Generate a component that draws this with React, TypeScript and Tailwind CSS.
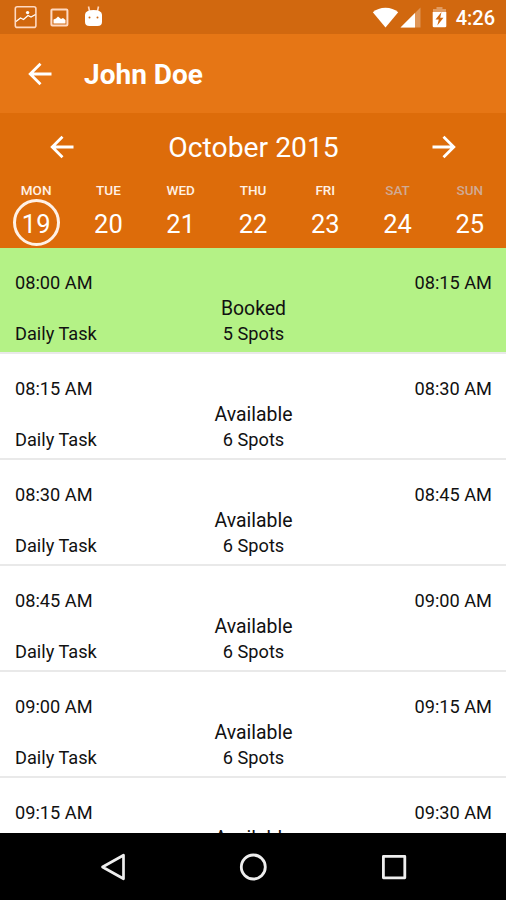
import { useState } from 'react';

interface Day {
  label: string;
  date: number;
  weekend?: boolean;
}

interface Slot {
  start: string;
  end: string;
  title: string;
  spots: number;
  booked?: boolean;
}

const days: Day[] = [
  { label: 'MON', date: 19 },
  { label: 'TUE', date: 20 },
  { label: 'WED', date: 21 },
  { label: 'THU', date: 22 },
  { label: 'FRI', date: 23 },
  { label: 'SAT', date: 24, weekend: true },
  { label: 'SUN', date: 25, weekend: true },
];

const slots: Slot[] = [
  { start: '08:00 AM', end: '08:15 AM', title: 'Daily Task', spots: 5, booked: true },
  { start: '08:15 AM', end: '08:30 AM', title: 'Daily Task', spots: 6 },
  { start: '08:30 AM', end: '08:45 AM', title: 'Daily Task', spots: 6 },
  { start: '08:45 AM', end: '09:00 AM', title: 'Daily Task', spots: 6 },
  { start: '09:00 AM', end: '09:15 AM', title: 'Daily Task', spots: 6 },
  { start: '09:15 AM', end: '09:30 AM', title: 'Daily Task', spots: 6 },
];

export default function App() {
  const [selected, setSelected] = useState(19);

  return (
    <div className="flex h-[900px] w-[506px] flex-col overflow-hidden bg-white font-['Roboto',sans-serif] text-[#111]">
      <StatusBar />

      <header className="flex h-[79px] shrink-0 items-center bg-[#e67615] pl-7 text-white">
        <button type="button" aria-label="Back">
          <ArrowIcon />
        </button>
        <h1 className="ml-8 pt-0.5 text-[28px] leading-8 font-bold">John Doe</h1>
      </header>

      <section className="h-[135px] shrink-0 bg-[#dd6c0a] text-white">
        <div className="flex h-[69px] items-center justify-between px-[50px]">
          <button type="button" aria-label="Previous week" className="pb-0.5">
            <ArrowIcon />
          </button>
          <h2 className="pt-px pl-px text-[28.3px] leading-8">October 2015</h2>
          <button type="button" aria-label="Next week" className="rotate-180 pt-0.5">
            <ArrowIcon />
          </button>
        </div>
        <div className="grid grid-cols-7">
          {days.map((day) => (
            <DayCell key={day.date} day={day} active={day.date === selected} onSelect={() => setSelected(day.date)} />
          ))}
        </div>
      </section>

      <main className="min-h-0 flex-1 overflow-hidden">
        {slots.map((slot) => (
          <SlotRow key={slot.start} slot={slot} />
        ))}
      </main>

      <NavigationBar />
    </div>
  );
}

interface DayCellProps {
  day: Day;
  active: boolean;
  onSelect: () => void;
}

function DayCell({ day, active, onSelect }: DayCellProps) {
  return (
    <button type="button" onClick={onSelect} className="flex flex-col items-center">
      <span className={`text-[13.5px] leading-4 font-medium ${day.weekend ? 'text-[#d0aa94]' : 'text-[#fff1e6]'}`}>
        {day.label}
      </span>
      <span
        className={`mt-px flex size-[47px] items-center justify-center rounded-full border-3 pt-1 text-[25.5px] leading-none ${
          active ? 'border-[#fff1e6]' : 'border-transparent'
        }`}
      >
        {day.date}
      </span>
    </button>
  );
}

function SlotRow({ slot }: { slot: Slot }) {
  return (
    <div
      className={`grid h-[106px] grid-cols-3 border-b-2 border-[#e9e9e9] pt-[23px] pr-[14px] pl-[15px] text-[18.2px] leading-6 ${
        slot.booked ? 'bg-[#b4f286]' : 'bg-white'
      }`}
    >
      <div className="flex flex-col gap-[27px]">
        <span>{slot.start}</span>
        <span>{slot.title}</span>
      </div>
      <div className="flex flex-col items-center gap-px pt-[26px]">
        <span className="text-[19.4px]">{slot.booked ? 'Booked' : 'Available'}</span>
        <span>{slot.spots} Spots</span>
      </div>
      <span className="text-right">{slot.end}</span>
    </div>
  );
}

function StatusBar() {
  return (
    <div className="flex h-[34px] shrink-0 items-center justify-between bg-[#d1680f] pr-[11px] pl-3.5 text-white">
      <div className="flex items-center">
        <svg className="h-6 w-6" viewBox="0 0 24 24" fill="none" stroke="#ffd9c2" strokeWidth="1.6">
          <rect x="1.3" y="1.8" width="20.6" height="20.6" rx="2" />
          <path d="M2 16.5 6.5 13l3 1.5 4.5-4 3 1.5 4.5-2.5" stroke="#fff" strokeWidth="1.3" />
          <circle cx="13.6" cy="7.6" r="1.7" fill="#fff" stroke="none" />
        </svg>
        <svg className="ml-3 h-5 w-[19px]" viewBox="0 0 19 20" fill="none">
          <rect x="1.4" y="2.4" width="16" height="16" rx="1" stroke="#ffd9c2" strokeWidth="2" />
          <path d="M3.5 16.5v-4l2.5-1 2-2 3 2.5 2-1 2.5 2v3.5z" fill="#fff" />
        </svg>
        <svg className="mb-0.5 ml-[15px] h-[22px] w-[19px]" viewBox="0 0 19 22" fill="#fff">
          <path d="M4.5 1.5 5.5 6M14.5 1.5 13.5 6" stroke="#ffd9c2" strokeWidth="1.6" />
          <path d="M1 9.5Q1.5 5 9.5 5T18 9.5V17q0 4-4.5 4h-8Q1 21 1 17z" />
          <circle cx="5.5" cy="12.5" r="1" fill="#d1680f" />
          <circle cx="13.5" cy="12.5" r="1" fill="#d1680f" />
        </svg>
      </div>
      <div className="flex items-center">
        <svg className="h-[21px] w-[27px]" viewBox="0 0 27 21" fill="#fff">
          <path d="M.8 5.3Q6 .8 13.5.8t12.7 4.5L13.5 20.5z" />
        </svg>
        <svg className="ml-px h-[21px] w-[21px]" viewBox="0 0 21 21" fill="#fff">
          <path d="M20.5.5v20H.5z" opacity=".3" />
          <path d="M15 6v14.5H.5z" />
        </svg>
        <svg className="ml-[11px] h-[22px] w-[15px]" viewBox="0 0 15 22" fill="#fff">
          <path d="M4.5 1h6v2H14v4H1V3h3.5z" opacity=".35" />
          <path d="M.7 6h13.6v14q0 1.3-1.3 1.3H2Q.7 21.3.7 20z" />
          <path d="M9.5 6 3.5 13.5h3.3L5.3 19.5l6.2-7.7H8.2z" fill="#d1680f" />
        </svg>
        <span className="ml-[9px] pt-0.5 text-[20px] leading-6 font-medium">4:26</span>
      </div>
    </div>
  );
}

function ArrowIcon() {
  return (
    <svg className="h-6 w-6" viewBox="0 0 24 24" fill="none" stroke="currentColor" strokeWidth="2.8">
      <path d="M23.5 12H2.5M12.5 1.7 2.2 12l10.3 10.3" />
    </svg>
  );
}

function NavigationBar() {
  return (
    <nav className="flex h-[67px] shrink-0 items-center justify-center gap-[112px] bg-black text-[#eee]">
      <svg className="h-7 w-7" viewBox="0 0 28 28" fill="none" stroke="currentColor" strokeWidth="2.7" strokeLinejoin="round">
        <path d="M24.5 2.2v23.6L3.5 14z" />
      </svg>
      <svg className="h-7 w-7" viewBox="0 0 28 28" fill="none" stroke="currentColor" strokeWidth="2.8">
        <circle cx="14.3" cy="14" r="12" />
      </svg>
      <svg className="h-7 w-7" viewBox="0 0 28 28" fill="none" stroke="currentColor" strokeWidth="2.8" strokeLinejoin="round">
        <rect x="4.4" y="3.4" width="21.4" height="21.4" />
      </svg>
    </nav>
  );
}
